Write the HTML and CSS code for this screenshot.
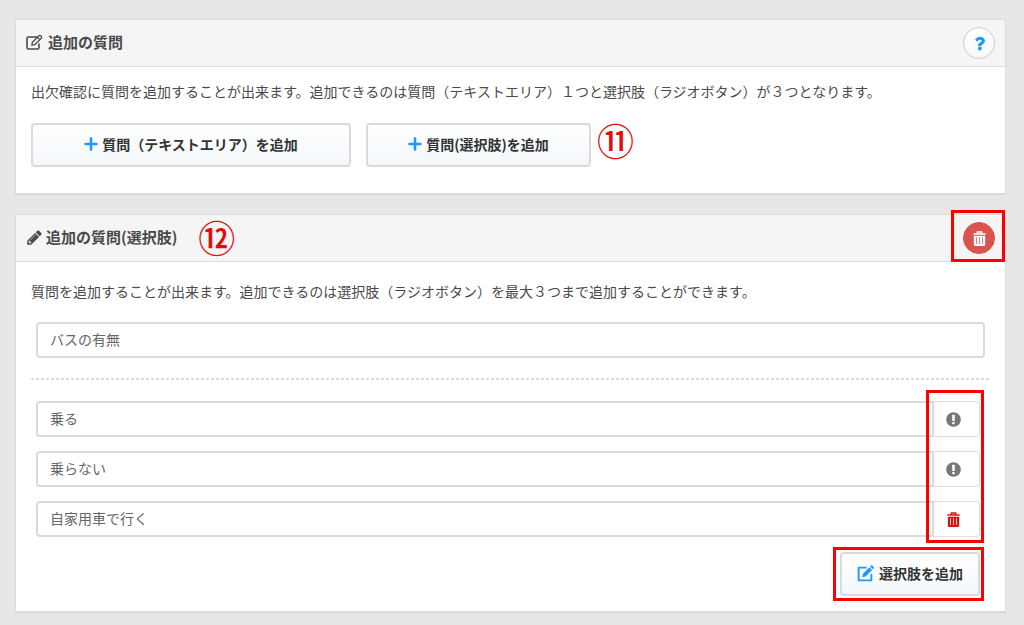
FILE: index.html
```html
<!DOCTYPE html>
<html lang="ja">
<head>
<meta charset="utf-8">
<title>追加の質問</title>
<link rel="stylesheet" href="styles.css">
</head>
<body>
<svg class="sprite" aria-hidden="true">
  <symbol id="edit" viewBox="0 0 17 17"><path d="M10.500 3H2.500q-1.500 0-1.500 1.500v9q0 1.500 1.500 1.500h9q1.500 0 1.500-1.500V10" fill="none" stroke="currentColor" stroke-width="1.600" stroke-linecap="round"/><path d="M5.800 11.200l.6-2.900 6.500-6.500q.9-.8 1.800 0l.6.6q.8.900 0 1.800l-6.500 6.500zM11.500 3.300l2.300 2.300" fill="none" stroke="currentColor" stroke-width="1.300" stroke-linejoin="round"/></symbol>
  <symbol id="compose" viewBox="0 0 16 16"><path d="M9 2.500H1.500v12h12V8.500" fill="none" stroke="currentColor" stroke-width="1.800" stroke-linejoin="round"/><path d="M5 11.500l.6-3.300 6-6 2.600 2.600-6 6zM12.300 1.500l1-1q.5-.4 1 0l1.500 1.500q.4.500 0 1l-1 1z"/></symbol>
  <symbol id="pencil" viewBox="0 0 1792 1792"><path d="M491 1536l91-91-235-235-91 91v107h128v128h107zm523-928q0-22-22-22-10 0-17 7l-542 542q-7 7-7 17 0 22 22 22 10 0 17-7l542-542q7-7 7-17zm-54-192l416 416-832 832h-416v-416zm683 96q0 53-37 90l-166 166-416-416 166-165q36-38 90-38 53 0 91 38l235 234q37 39 37 91z"/></symbol>
  <symbol id="plus" viewBox="0 0 14 14"><path d="M7 1.500v11M1.500 7h11" fill="none" stroke="currentColor" stroke-width="2.600" stroke-linecap="round"/></symbol>
  <symbol id="help" viewBox="0 0 1792 1792"><path d="M1088 1256v240q0 16-12 28t-28 12h-240q-16 0-28-12t-12-28v-240q0-16 12-28t28-12h240q16 0 28 12t12 28zm316-600q0 54-15.500 101t-35 76.500-55 59.500-57.500 43.500-61 35.500q-41 23-68.500 65t-27.500 67q0 17-12 32.500t-28 15.500h-240q-15 0-25.500-18.500t-10.500-37.500v-45q0-83 65-156.500t143-108.500q59-27 84-56t25-76q0-42-46.500-74t-107.500-32q-65 0-108 29-35 25-107 115-13 16-31 16-12 0-25-8l-164-125q-13-10-15.500-25t5.500-28q160-266 464-266 80 0 161 31t146 83 106 127.500 41 158.500z"/></symbol>
  <symbol id="alert" viewBox="0 0 1792 1792"><path d="M896 128q209 0 385.500 103t279.500 279.500 103 385.500-103 385.500-279.500 279.500-385.500 103-385.500-103-279.500-279.500-103-385.500 103-385.500 279.500-279.500 385.500-103zm128 1247v-190q0-14-9-23.500t-22-9.500h-192q-13 0-23 10t-10 23v190q0 13 10 23t23 10h192q13 0 22-9.500t9-23.500zm-2-344l18-621q0-12-10-18-10-8-24-8h-220q-14 0-24 8-10 6-10 18l17 621q0 10 10 17.500t24 7.500h185q14 0 23.500-7.500t10.500-17.500z"/></symbol>
  <symbol id="trash" viewBox="0 0 16 18"><path d="M1.500 4.200h13M5.700 3.800V2.200h4.600v1.600" fill="none" stroke="currentColor" stroke-width="1.500"/><path fill-rule="evenodd" d="M2 6h12v9.500q0 1.500-1.500 1.500h-9Q2 17 2 15.500zM4.500 7.800v7h.8v-7zM7.600 7.800v7h.8v-7zM10.700 7.800v7h.8v-7z"/></symbol>
</svg>

<main class="page">
  <section class="panel">
    <header class="panel-head">
      <h2 class="title"><svg class="icon icon-lg"><use href="#edit"/></svg>追加の質問</h2>
      <button type="button" class="round" aria-label="ヘルプ"><svg class="icon icon-xl"><use href="#help"/></svg></button>
    </header>
    <div class="panel-body">
      <p class="lead">出欠確認に質問を追加することが出来ます。追加できるのは質問（テキストエリア）１つと選択肢（ラジオボタン）が３つとなります。</p>
      <div class="actions">
        <button type="button" class="btn btn-wide"><svg class="icon"><use href="#plus"/></svg>質問（テキストエリア）を追加</button>
        <button type="button" class="btn btn-mid"><svg class="icon"><use href="#plus"/></svg>質問(選択肢)を追加</button>
        <span class="step">⑪</span>
      </div>
    </div>
  </section>

  <section class="panel">
    <header class="panel-head">
      <h2 class="title title-tight"><svg class="icon icon-lg"><use href="#pencil"/></svg>追加の質問(選択肢)</h2>
      <span class="step step-head">⑫</span>
      <button type="button" class="round round-danger marked mark-delete" aria-label="質問を削除"><svg class="icon icon-lg"><use href="#trash"/></svg></button>
    </header>
    <div class="panel-body">
      <p class="lead lead-spaced">質問を追加することが出来ます。追加できるのは選択肢（ラジオボタン）を最大３つまで追加することができます。</p>
      <div class="question"><input class="field" type="text" value="バスの有無" aria-label="質問"></div>
      <hr class="rule">
      <div class="options">
        <div class="option"><input class="field" type="text" value="乗る" aria-label="選択肢1"><button type="button" class="addon" aria-label="必須の選択肢"><svg class="icon icon-lg"><use href="#alert"/></svg></button></div>
        <div class="option"><input class="field" type="text" value="乗らない" aria-label="選択肢2"><button type="button" class="addon" aria-label="必須の選択肢"><svg class="icon icon-lg"><use href="#alert"/></svg></button></div>
        <div class="option"><input class="field" type="text" value="自家用車で行く" aria-label="選択肢3"><button type="button" class="addon addon-delete" aria-label="選択肢を削除"><svg class="icon icon-lg"><use href="#trash"/></svg></button></div>
        <span class="mark-options"></span>
      </div>
      <div class="footer">
        <button type="button" class="btn btn-add marked mark-add"><svg class="icon icon-lg"><use href="#compose"/></svg>選択肢を追加</button>
      </div>
    </div>
  </section>
</main>
</body>
</html>
```

FILE: styles.css
```css
* { box-sizing: border-box; }

body {
  margin: 0;
  background: #e7e7e7;
  color: #4a4a4a;
  font: 14px/20px "Noto Sans CJK JP", sans-serif;
}

button, input { font: inherit; color: inherit; margin: 0; }

.sprite { position: absolute; width: 0; height: 0; }

.page {
  display: flex;
  flex-direction: column;
  gap: 20px;
  padding: 19px 18px 12px 15px;
}

.panel {
  background: #fff;
  border: 1px solid #dcdcdc;
  box-shadow: 0 1px 1px #d8d8d8;
}

.panel-head {
  display: flex;
  align-items: center;
  height: 47px;
  padding: 0 10px;
  background: #f5f5f5;
  border-bottom: 1px solid #ddd;
}

.title {
  display: flex;
  align-items: center;
  gap: 5px;
  margin: 0;
  padding-bottom: 2px;
  font-size: 15px;
  font-weight: 700;
}

.title-tight { gap: 3px; }

.icon {
  width: 14px;
  height: 14px;
  flex: none;
  fill: currentColor;
}

.icon-lg { width: 17px; height: 17px; }
.icon-xl { width: 19px; height: 19px; }

.round {
  position: relative;
  display: grid;
  place-items: center;
  width: 32px;
  height: 32px;
  margin-left: auto;
  padding: 0;
  border: 1px solid #ccc;
  border-radius: 50%;
  background: linear-gradient(#fff, #f5f8fa);
  color: #1e98ff;
}

.round-danger {
  border-color: #d9534f;
  background: #d9534f;
  color: #fff;
}

.panel-body { padding: 13px 15px; }

.lead { margin: 0; padding: 1px 0; }
.lead-spaced { padding-top: 6px; }

.actions {
  display: flex;
  align-items: center;
  padding: 21px 0 13px;
}

.btn {
  display: flex;
  align-items: center;
  justify-content: center;
  gap: 4px;
  height: 44px;
  padding: 0 14px 2px;
  border: 2px solid #d8dadc;
  border-radius: 4px;
  background: linear-gradient(#fff, #f4f7fa);
  color: #333;
  font-weight: 700;
}

.btn .icon { color: #1e98ff; }
.btn-wide { width: 320px; margin-right: 15px; }
.btn-mid { width: 225px; margin-right: 6px; }
.btn-add { position: relative; width: 140px; gap: 5px; }

.step {
  padding-bottom: 10px;
  color: #e30b0b;
  font-size: 37px;
  font-weight: 500;
  line-height: 34px;
}

.step-head { margin-left: 21px; padding-bottom: 3px; }

.question { padding: 20px 5px; }

.field {
  display: block;
  flex: 1;
  width: 100%;
  min-width: 0;
  height: 36px;
  padding: 0 12px 2px;
  border: 2px solid #dadada;
  border-radius: 4px;
  background: #fff;
  color: #666;
}

.rule {
  height: 2px;
  margin: 0;
  border: 0;
  background: repeating-linear-gradient(to right, #ddd 0 3px, #fff 3px 5px);
}

.options {
  position: relative;
  display: grid;
  gap: 14px;
  margin: 21px 10px 15px 5px;
}

.option { display: flex; }

.option .field { border-radius: 4px 0 0 4px; }

.addon {
  display: grid;
  place-items: center;
  width: 46px;
  padding: 0 6px 0 0;
  border: 1px solid #ddd;
  border-left: 0;
  border-radius: 0 4px 4px 0;
  background: #fff;
  color: #777;
}

.addon-delete { color: #e01010; }

.footer {
  display: flex;
  justify-content: flex-end;
  padding: 0 10px 2px 0;
}

.marked::after, .mark-options {
  content: "";
  position: absolute;
  border: 3px solid #f00;
  pointer-events: none;
}

.mark-delete::after { inset: -13px -11px -9px -13px; }
.mark-add::after { inset: -7px -6px -7px -9px; }
.mark-options { top: -11px; right: -4px; bottom: -6px; width: 58px; }
```
